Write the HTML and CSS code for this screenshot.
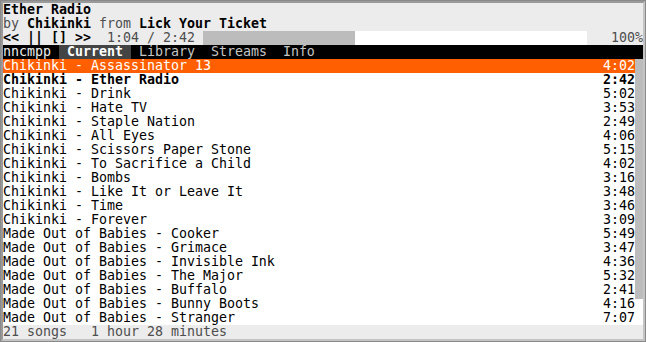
FILE: index.html
```html
<!DOCTYPE html>
<html lang="en">
<head>
  <meta charset="UTF-8" />
  <title>nncmpp</title>
  <link rel="stylesheet" href="styles.css">
</head>
<body>
  <div class="term">
    <div class="row head"><b>Ether Radio</b></div>
    <div class="row head"><span class="dim">by </span><b>Chikinki</b><span class="dim"> from </span><b>Lick Your Ticket</b></div>
    <div class="row head ctrl">
      <b>&lt;&lt; || [] &gt;&gt;</b><span class="dim">  1:04 / 2:42 </span>
      <div class="bar"><div class="fill"></div></div>
      <span class="dim vol">100%</span>
    </div>
    <div class="row tabs">
      <span class="app">nncmpp </span><span class="tab on"> Current </span><span class="tab"> Library </span><span class="tab"> Streams </span><span class="tab"> Info </span>
    </div>
    <div class="list">
      <div class="songs">
        <div class="row song sel"><span>Chikinki - Assassinator 13</span><span>4:02</span></div>
        <div class="row song cur"><span>Chikinki - Ether Radio</span><span>2:42</span></div>
        <div class="row song"><span>Chikinki - Drink</span><span>5:02</span></div>
        <div class="row song"><span>Chikinki - Hate TV</span><span>3:53</span></div>
        <div class="row song"><span>Chikinki - Staple Nation</span><span>2:49</span></div>
        <div class="row song"><span>Chikinki - All Eyes</span><span>4:06</span></div>
        <div class="row song"><span>Chikinki - Scissors Paper Stone</span><span>5:15</span></div>
        <div class="row song"><span>Chikinki - To Sacrifice a Child</span><span>4:02</span></div>
        <div class="row song"><span>Chikinki - Bombs</span><span>3:16</span></div>
        <div class="row song"><span>Chikinki - Like It or Leave It</span><span>3:48</span></div>
        <div class="row song"><span>Chikinki - Time</span><span>3:46</span></div>
        <div class="row song"><span>Chikinki - Forever</span><span>3:09</span></div>
        <div class="row song"><span>Made Out of Babies - Cooker</span><span>5:49</span></div>
        <div class="row song"><span>Made Out of Babies - Grimace</span><span>3:47</span></div>
        <div class="row song"><span>Made Out of Babies - Invisible Ink</span><span>4:36</span></div>
        <div class="row song"><span>Made Out of Babies - The Major</span><span>5:32</span></div>
        <div class="row song"><span>Made Out of Babies - Buffalo</span><span>2:41</span></div>
        <div class="row song"><span>Made Out of Babies - Bunny Boots</span><span>4:16</span></div>
        <div class="row song"><span>Made Out of Babies - Stranger</span><span>7:07</span></div>
      </div>
      <div class="scroll"><div class="thumb"></div></div>
    </div>
    <div class="row head status"><span class="dim">21 songs   1 hour 28 minutes</span></div>
  </div>
</body>
</html>
```

FILE: styles.css
```css
body { margin: 0; background: #fff; }
.term { width: 640px; height: 336px; border: 3px solid #c4c4c4; border-top-color: #9a9a9a; border-left-color: #9a9a9a; outline: 1px solid #8a8a8a; outline-offset: -1px; background: #fff; color: #000; font-family: "DejaVu Sans Mono", monospace; font-size: 13.29px; overflow: hidden; }
.row { height: 14px; line-height: 14px; }
.row span, .row b { white-space: pre; }
.head { background: #ececec; }
.dim { color: #4e4e4e; }
.ctrl { display: flex; }
.bar { width: 384px; height: 14px; background: #fff; }
.fill { width: 152px; height: 14px; background: #bcbcbc; }
.vol { flex: 1; text-align: right; }
.tabs { background: #000; color: #c6c6c6; display: flex; }
.app { color: #eee; }
.tab.on { background: #444; color: #fff; font-weight: bold; }
.list { display: flex; height: 266px; }
.songs { width: 632px; }
.song { display: flex; justify-content: space-between; }
.sel { background: #ff5f00; color: #fff; }
.cur { font-weight: bold; }
.scroll { width: 8px; }
.thumb { height: 240px; background: #bcbcbc; }
.status { background: #ececec; }
```
